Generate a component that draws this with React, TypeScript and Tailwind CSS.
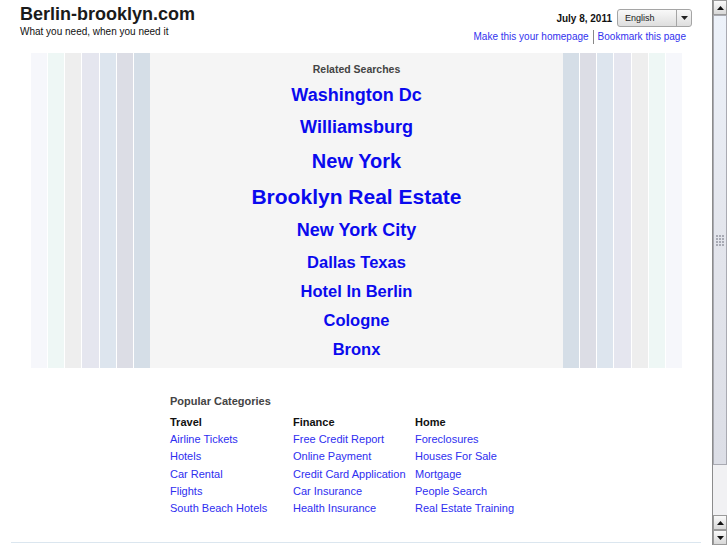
const stripes = ["#f6f7fb", "#eef7f5", "#eeeeee", "#e5e6ef", "#dde5ee", "#dcdde5", "#d5dee7"];

const related: { label: string; size: string; row: string }[] = [
  { label: "Washington Dc", size: "text-[18px]", row: "h-[32px]" },
  { label: "Williamsburg", size: "text-[18px]", row: "h-[32px]" },
  { label: "New York", size: "text-[20px]", row: "h-[36px]" },
  { label: "Brooklyn Real Estate", size: "text-[21px]", row: "h-[34px]" },
  { label: "New York City", size: "text-[18px]", row: "h-[34px]" },
  { label: "Dallas Texas", size: "text-[16.5px]", row: "h-[30px]" },
  { label: "Hotel In Berlin", size: "text-[16.5px]", row: "h-[28px]" },
  { label: "Cologne", size: "text-[16.5px]", row: "h-[30px]" },
  { label: "Bronx", size: "text-[16.5px]", row: "h-[28px]" },
];

const categories = [
  { title: "Travel", w: "w-[123px]", links: ["Airline Tickets", "Hotels", "Car Rental", "Flights", "South Beach Hotels"] },
  { title: "Finance", w: "w-[122px]", links: ["Free Credit Report", "Online Payment", "Credit Card Application", "Car Insurance", "Health Insurance"] },
  { title: "Home", w: "w-[123px]", links: ["Foreclosures", "Houses For Sale", "Mortgage", "People Search", "Real Estate Training"] },
];

function Stripes({ reverse }: { reverse?: boolean }) {
  const list = reverse ? [...stripes].reverse() : stripes;
  return (
    <div className="flex w-[119px] gap-px">
      {list.map((c, i) => (
        <div key={i} className="flex-1" style={{ backgroundColor: c }} />
      ))}
    </div>
  );
}

function ArrowBtn({ up }: { up?: boolean }) {
  return (
    <div className="flex h-[15px] items-center justify-center border border-[#9a9a9a] bg-gradient-to-b from-[#fafafa] to-[#d8d8d8]">
      <svg width="7" height="4" viewBox="0 0 7 4">
        {up ? <polygon points="0,4 7,4 3.5,0" fill="#111" /> : <polygon points="0,0 7,0 3.5,4" fill="#111" />}
      </svg>
    </div>
  );
}

function Scrollbar() {
  return (
    <div className="flex w-[15px] flex-col border-l border-[#8c8c8c] bg-[#e6e6ea]">
      <ArrowBtn up />
      <div className="flex h-[450px] items-center justify-center border border-[#a9aab2] bg-gradient-to-b from-[#edf2fa] via-[#e3e5ec] to-[#dcdee6]">
        <div className="grid grid-cols-3 gap-[1px]">
          {Array.from({ length: 12 }).map((_, i) => (
            <div key={i} className="h-[2px] w-[2px] bg-[#a8aab4]" />
          ))}
        </div>
      </div>
      <div className="flex-1 bg-[#f1f1f3]" />
      <ArrowBtn up />
      <ArrowBtn />
    </div>
  );
}

export default function App() {
  return (
    <div className="flex h-[545px] w-[727px] overflow-hidden bg-white text-[#222]" style={{ fontFamily: '"Liberation Sans", Arial, sans-serif' }}>
      <div className="flex w-[712px] flex-col">
        {/* header */}
        <div className="flex h-[53px] justify-between pl-[20px] pr-[20px]">
          <div className="pt-[4px]">
            <div className="text-[18px] font-bold leading-[20px] text-[#1a1a1a]">Berlin-brooklyn.com</div>
            <div className="mt-[2px] text-[10px] leading-[12px] text-[#111]">What you need, when you need it</div>
          </div>
          <div className="flex flex-col items-end pt-[9px]">
            <div className="flex items-center gap-[5px]">
              <span className="text-[10px] font-bold text-[#111]">July 8, 2011</span>
              <div className="flex h-[18px] w-[75px] rounded-[3px] border border-[#a5a5a5] bg-gradient-to-b from-[#f9f9f9] to-[#dedede]">
                <span className="flex-1 pl-[7px] text-[9px] leading-[16px] text-[#222]">English</span>
                <div className="flex w-[15px] items-center justify-center border-l border-[#a5a5a5]">
                  <svg width="7" height="4" viewBox="0 0 7 4">
                    <polygon points="0,0 7,0 3.5,4" fill="#222" />
                  </svg>
                </div>
              </div>
            </div>
            <div className="mt-[3px] flex items-center pr-[6px] text-[10px] leading-[12px] text-[#3232ee]">
              <span>Make this your homepage</span>
              <span className="mx-[4px] h-[14px] w-px bg-[#888]" />
              <span>Bookmark this page</span>
            </div>
          </div>
        </div>

        {/* related searches panel */}
        <div className="ml-[31px] flex h-[315px] w-[651px]">
          <Stripes />
          <div className="flex flex-1 flex-col items-center bg-[#f5f5f5] pt-[9px]">
            <div className="mb-[3px] text-[10.5px] font-bold leading-[14px] text-[#444]">Related Searches</div>
            {related.map((r) => (
              <div key={r.label} className={`flex items-center ${r.row}`}>
                <a className={`${r.size} font-bold leading-none text-[#0a0aee]`}>{r.label}</a>
              </div>
            ))}
          </div>
          <Stripes reverse />
        </div>

        {/* popular categories */}
        <div className="ml-[170px] mt-[27px]">
          <div className="text-[11px] font-bold leading-[13px] text-[#444]">Popular Categories</div>
          <div className="mt-[6px] flex">
            {categories.map((c) => (
              <div key={c.title} className={c.w}>
                <div className="text-[11px] font-bold leading-[17px] text-[#111]">{c.title}</div>
                {c.links.map((l) => (
                  <div key={l} className="text-[11px] leading-[17.25px] text-[#2e2ef0]">{l}</div>
                ))}
              </div>
            ))}
          </div>
        </div>

        <div className="mx-[11px] mt-[25px] border-t border-[#dbe6ef]" />
      </div>
      <Scrollbar />
    </div>
  );
}
